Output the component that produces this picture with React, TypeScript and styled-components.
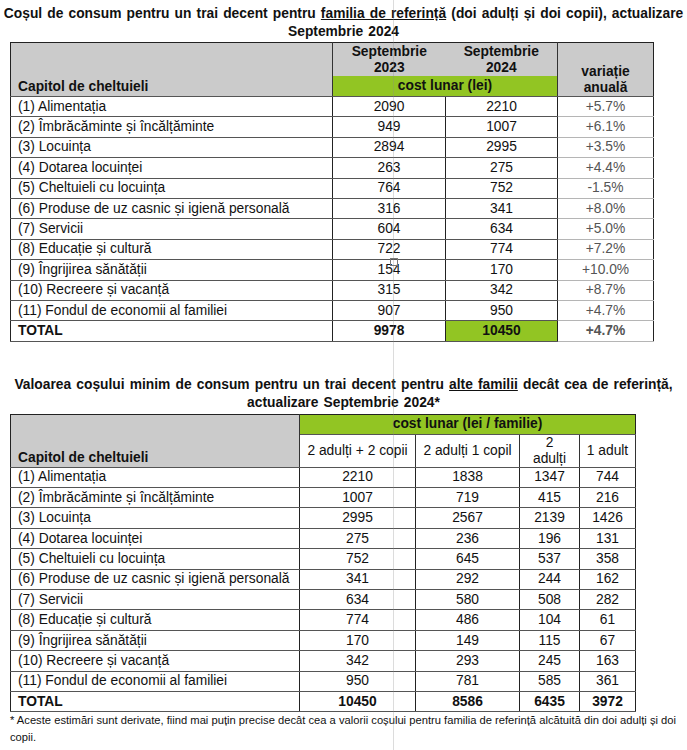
import React from "react";
import styled, { createGlobalStyle } from "styled-components";

const Global = createGlobalStyle`
  html, body { margin: 0; padding: 0; background: #fff; }
  body { font-family: "Liberation Sans", Arial, sans-serif; color: #111; }
`;

const GREEN = "#92c523";
const GRAY = "#cbcbcb";

const Page = styled.div`
  position: relative;
  width: 687px;
  height: 750px;
  overflow: hidden;
  padding-top: 5px;
  box-sizing: border-box;
`;

const Title = styled.div<{ $mt?: number }>`
  margin-top: ${(p) => p.$mt ?? 0}px;
  text-align: center;
  font-weight: bold;
  font-size: 13.8px;
  line-height: 18px;
  word-spacing: 1.3px;
  white-space: nowrap;
  u { text-decoration: underline; }
`;

const Table = styled.table<{ $w: number; $mt: number }>`
  margin: ${(p) => p.$mt}px 0 0 10px;
  width: ${(p) => p.$w}px;
  table-layout: fixed;
  border-collapse: collapse;
  border: 1.5px solid #222;
  font-size: 13.8px;
`;

const HeadCell = styled.td<{ $bg?: string; $h?: number; $align?: string; $valign?: string; $br?: boolean; $bl?: boolean; $bb?: boolean }>`
  background: ${(p) => p.$bg ?? GRAY};
  height: ${(p) => p.$h ?? 20}px;
  padding: 0 2px;
  text-align: ${(p) => p.$align ?? "center"};
  vertical-align: ${(p) => p.$valign ?? "middle"};
  font-weight: bold;
  line-height: 16px;
  border-right: ${(p) => (p.$br ? "1px solid #333" : "none")};
  border-left: ${(p) => (p.$bl ? "1px solid #333" : "none")};
  border-bottom: ${(p) => (p.$bb ? "1px solid #555" : "none")};
`;

const LabelHead = styled(HeadCell)`
  padding-left: 7px;
  padding-bottom: 1px;
`;

const SubHead = styled.td`
  background: #fff;
  height: 32px;
  text-align: center;
  font-weight: normal;
  line-height: 16px;
  padding: 0 2px;
  border-right: 1px solid #333;
  border-bottom: 1px solid #555;
`;

const Row = styled.tr<{ $total?: boolean }>`
  height: 20.4px;
  font-weight: ${(p) => (p.$total ? "bold" : "normal")};
`;

const Label = styled.td`
  padding: 0 0 0 7px;
  text-align: left;
  white-space: nowrap;
  border-right: 1px solid #222;
  border-bottom: 1px solid #555;
  line-height: 16px;
`;

const Num = styled.td<{ $green?: boolean }>`
  padding: 0 2px;
  text-align: center;
  border-right: 1px solid #222;
  border-bottom: 1px solid #555;
  background: ${(p) => (p.$green ? GREEN : "#fff")};
  line-height: 16px;
`;

const Var = styled.td`
  padding: 0 2px;
  text-align: center;
  color: #555;
  border-bottom: 1px solid #b5b5b5;
  line-height: 16px;
`;

const Foot = styled.div`
  margin: 0 0 0 10px;
  width: 675px;
  font-size: 11.2px;
  line-height: 17px;
  color: #111;
`;

const Artifact = styled.div`
  position: absolute;
  left: 393px;
  top: 0;
  width: 1px;
  height: 750px;
  background: rgba(140, 140, 140, 0.3);
  pointer-events: none;
`;

const ArtifactBox = styled.div`
  position: absolute;
  left: 390px;
  top: 258px;
  width: 6px;
  height: 6px;
  border: 1px solid #777;
  background: transparent;
  pointer-events: none;
`;

const labels = [
  "(1) Alimentația",
  "(2) Îmbrăcăminte și încălțăminte",
  "(3) Locuința",
  "(4) Dotarea locuinței",
  "(5) Cheltuieli cu locuința",
  "(6) Produse de uz casnic și igienă personală",
  "(7) Servicii",
  "(8) Educație și cultură",
  "(9) Îngrijirea sănătății",
  "(10) Recreere și vacanță",
  "(11) Fondul de economii al familiei",
];

const t1: [string, string, string][] = [
  ["2090", "2210", "+5.7%"],
  ["949", "1007", "+6.1%"],
  ["2894", "2995", "+3.5%"],
  ["263", "275", "+4.4%"],
  ["764", "752", "-1.5%"],
  ["316", "341", "+8.0%"],
  ["604", "634", "+5.0%"],
  ["722", "774", "+7.2%"],
  ["154", "170", "+10.0%"],
  ["315", "342", "+8.7%"],
  ["907", "950", "+4.7%"],
];

const t2: string[][] = [
  ["2210", "1838", "1347", "744"],
  ["1007", "719", "415", "216"],
  ["2995", "2567", "2139", "1426"],
  ["275", "236", "196", "131"],
  ["752", "645", "537", "358"],
  ["341", "292", "244", "162"],
  ["634", "580", "508", "282"],
  ["774", "486", "104", "61"],
  ["170", "149", "115", "67"],
  ["342", "293", "245", "163"],
  ["950", "781", "585", "361"],
];

export default function App() {
  return (
    <Page>
      <Global />
      <Title>
        Coșul de consum pentru un trai decent pentru <u>familia de referință</u> (doi adulți și doi copii), actualizare
        <br />
        Septembrie 2024
      </Title>

      <Table $w={643} $mt={1}>
        <colgroup>
          <col style={{ width: 322 }} />
          <col style={{ width: 113 }} />
          <col style={{ width: 112 }} />
          <col style={{ width: 96 }} />
        </colgroup>
        <tbody>
          <tr>
            <LabelHead rowSpan={2} $align="left" $valign="bottom" $br $bb>
              Capitol de cheltuieli
            </LabelHead>
            <HeadCell $h={33}>
              Septembrie
              <br />
              2023
            </HeadCell>
            <HeadCell $h={33}>
              Septembrie
              <br />
              2024
            </HeadCell>
            <HeadCell rowSpan={2} $valign="bottom" $bl $bb>
              variație
              <br />
              anuală
            </HeadCell>
          </tr>
          <tr>
            <HeadCell colSpan={2} $bg={GREEN} $h={20} $bb>
              cost lunar (lei)
            </HeadCell>
          </tr>
          {labels.map((l, i) => (
            <Row key={l}>
              <Label>{l}</Label>
              <Num>{t1[i][0]}</Num>
              <Num>{t1[i][1]}</Num>
              <Var>{t1[i][2]}</Var>
            </Row>
          ))}
          <Row $total>
            <Label>TOTAL</Label>
            <Num>9978</Num>
            <Num $green>10450</Num>
            <Var>+4.7%</Var>
          </Row>
        </tbody>
      </Table>

      <Title $mt={34}>
        Valoarea coșului minim de consum pentru un trai decent pentru <u>alte familii</u> decât cea de referință,
        <br />
        actualizare Septembrie 2024*
      </Title>

      <Table $w={625} $mt={2}>
        <colgroup>
          <col style={{ width: 289 }} />
          <col style={{ width: 116 }} />
          <col style={{ width: 104 }} />
          <col style={{ width: 60 }} />
          <col style={{ width: 56 }} />
        </colgroup>
        <tbody>
          <tr>
            <LabelHead rowSpan={2} $align="left" $valign="bottom" $br $bb>
              Capitol de cheltuieli
            </LabelHead>
            <HeadCell colSpan={4} $bg={GREEN} $h={19} $bb>
              cost lunar (lei / familie)
            </HeadCell>
          </tr>
          <tr>
            <SubHead>2 adulți + 2 copii</SubHead>
            <SubHead>2 adulți 1 copil</SubHead>
            <SubHead>
              2
              <br />
              adulți
            </SubHead>
            <SubHead>1 adult</SubHead>
          </tr>
          {labels.map((l, i) => (
            <Row key={l}>
              <Label>{l}</Label>
              {t2[i].map((v, j) => (
                <Num key={j}>{v}</Num>
              ))}
            </Row>
          ))}
          <Row $total>
            <Label>TOTAL</Label>
            <Num>10450</Num>
            <Num>8586</Num>
            <Num>6435</Num>
            <Num>3972</Num>
          </Row>
        </tbody>
      </Table>

      <Foot>
        * Aceste estimări sunt derivate, fiind mai puțin precise decât cea a valorii coșului pentru familia de referință alcătuită din doi adulți și doi copii.
      </Foot>

      <Artifact />
      <ArtifactBox />
    </Page>
  );
}
